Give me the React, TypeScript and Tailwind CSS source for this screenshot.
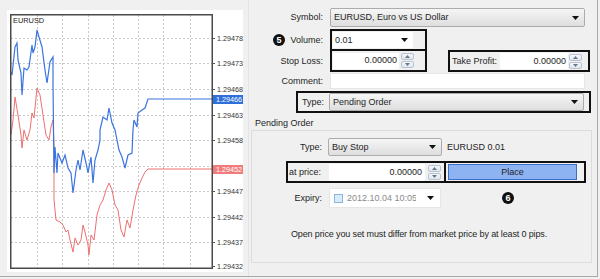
import React from "react";

const blue: [number, number][] = [
  [11, 72], [12, 75], [15, 47], [17, 43], [18, 60], [21, 73], [22, 95], [24, 68], [27, 70], [29, 67],
  [32, 45], [33, 53], [35, 47], [37, 30], [39, 37], [42, 47], [45, 70], [47, 83], [50, 62], [53, 57],
  [53, 85], [54, 173], [55, 147], [57, 173], [58, 153], [62, 163], [65, 155], [68, 168], [71, 173],
  [73, 193], [76, 170], [78, 160], [80, 170], [83, 150], [86, 163], [88, 173], [91, 157], [93, 183],
  [95, 160], [98, 150], [100, 140], [100, 130], [103, 117], [107, 120], [109, 108], [112, 123],
  [115, 130], [117, 140], [119, 150], [122, 157], [125, 168], [128, 155], [132, 153], [133, 130],
  [134, 120], [137, 127], [138, 113], [142, 110], [145, 108], [148, 99], [212, 99],
];

const red: [number, number][] = [
  [11, 135], [13, 120], [15, 97], [18, 115], [21, 135], [22, 148], [24, 130], [27, 140], [30, 130],
  [32, 113], [34, 118], [37, 88], [40, 95], [43, 115], [46, 135], [49, 140], [51, 127], [53, 120],
  [54, 145], [54, 200], [56, 220], [60, 222], [63, 225], [66, 232], [68, 230], [70, 240], [73, 252],
  [75, 238], [78, 245], [81, 240], [83, 225], [85, 232], [88, 245], [89, 255], [91, 235], [94, 240],
  [97, 215], [100, 205], [103, 200], [106, 190], [109, 183], [112, 190], [115, 205], [118, 210],
  [121, 230], [124, 237], [127, 220], [130, 228], [133, 210], [136, 195], [139, 185], [142, 178],
  [145, 172], [148, 169], [212, 169],
];

const prices: [string, number][] = [
  ["1.29478", 38], ["1.29473", 63], ["1.29468", 89], ["1.29463", 115], ["1.29458", 140],
  ["1.29447", 191], ["1.29442", 217], ["1.29437", 242], ["1.29432", 266],
];

const gridY = [38, 63, 89, 115, 140, 166, 191, 217, 242];
const gridX = [37, 62, 88, 113, 138, 163, 190];

const pts = (p: [number, number][]) => p.map(([x, y]) => `${x},${y}`).join(" ");

const Chart = () => (
  <svg width="236" height="262" viewBox="7 10 236 262" className="block">
    <rect x="7" y="10" width="236" height="262" fill="#fff" />
    {gridY.map((y) => (
      <line key={y} x1="11" y1={y + 0.5} x2="212" y2={y + 0.5} stroke="#c9c9c9" strokeDasharray="2 2" />
    ))}
    {gridX.map((x) => (
      <line key={x} x1={x + 0.5} y1="15" x2={x + 0.5} y2="268" stroke="#c9c9c9" strokeDasharray="2 2" />
    ))}
    <polyline points={pts(red)} fill="none" stroke="#ef7070" strokeWidth="1" />
    <polyline points={pts(blue)} fill="none" stroke="#3a74e0" strokeWidth="1.2" />
    <rect x="10.75" y="14.75" width="201.5" height="253.5" fill="none" stroke="#4a4a4a" strokeWidth="1.5" />
    <text x="13" y="23" fontSize="7.4" fill="#222" fontFamily="Liberation Sans, Arial, sans-serif">EURUSD</text>
    {prices.map(([t, y]) => (
      <g key={t}>
        <line x1="212" y1={y + 0.5} x2="215" y2={y + 0.5} stroke="#555" />
        <text x="217" y={y + 2.6} fontSize="7.2" fill="#333" fontFamily="Liberation Sans, Arial, sans-serif">{t}</text>
      </g>
    ))}
    <rect x="213" y="95" width="30" height="9" fill="#2f6fdc" />
    <text x="216" y="102" fontSize="7.2" fill="#fff" fontFamily="Liberation Sans, Arial, sans-serif">1.29466</text>
    <rect x="213" y="165" width="30" height="9" fill="#f07c7c" />
    <text x="216" y="172" fontSize="7.2" fill="#fff" fontFamily="Liberation Sans, Arial, sans-serif">1.29452</text>
  </svg>
);

const Arrow = () => (
  <svg width="7" height="4" viewBox="0 0 7 4" className="shrink-0">
    <path d="M0 0h7L3.5 4z" fill="#111" />
  </svg>
);

const Spinner = () => (
  <div className="flex h-[15px] w-[13px] shrink-0 flex-col gap-px">
    <div className="flex flex-1 items-center justify-center rounded-[2px] border border-[#b9c4d2] bg-gradient-to-b from-[#f4f7fb] to-[#dfe6ee]">
      <svg width="5" height="3" viewBox="0 0 5 3"><path d="M0 3h5L2.5 0z" fill="#6b7788" /></svg>
    </div>
    <div className="flex flex-1 items-center justify-center rounded-[2px] border border-[#b9c4d2] bg-gradient-to-b from-[#f4f7fb] to-[#dfe6ee]">
      <svg width="5" height="3" viewBox="0 0 5 3"><path d="M0 0h5L2.5 3z" fill="#6b7788" /></svg>
    </div>
  </div>
);

const Badge = ({ n }: { n: string }) => (
  <div className="flex h-[12px] w-[12px] shrink-0 items-center justify-center rounded-full bg-[#111] text-[9px] font-bold leading-none text-white">
    {n}
  </div>
);

const Combo = ({ w, text, white }: { w: string; text: string; white?: boolean }) => (
  <div
    className={`flex h-[18px] items-center justify-between rounded-[2px] border pl-[3px] pr-[5px] ${w} ${
      white ? "border-[#e2e2e2] bg-white" : "border-[#acacac] bg-gradient-to-b from-[#f6f6f6] to-[#dedede]"
    }`}
  >
    <span>{text}</span>
    <Arrow />
  </div>
);

export default function App() {
  return (
    <div className="h-[279px] w-[600px] overflow-hidden bg-[#f0f0f0] font-['Liberation_Sans',Arial,sans-serif] text-[9px] leading-none text-[#1e1e1e]">
      <div className="flex h-[277px] w-[598px] border-r border-b border-[#a8a8a8]">
        {/* chart side */}
        <div className="w-[248px] shrink-0 pl-[7px] pt-[10px]">
          <Chart />
        </div>

        {/* order form */}
        <div className="flex-1 border-l border-[#e4e4e4] pl-[1px]">
          {/* Symbol */}
          <div className="mt-[8px] flex h-[19px] items-center">
            <div className="w-[73px] text-right">Symbol:</div>
            <div className="ml-[7px] flex h-[19px] w-[255px] items-center justify-between rounded-[2px] border border-[#acacac] bg-gradient-to-b from-[#f6f6f6] to-[#dedede] pl-[3px] pr-[5px]">
              <span>EURUSD, Euro vs US Dollar</span>
              <Arrow />
            </div>
          </div>

          {/* Volume */}
          <div className="mt-[2px] flex h-[22px] items-center">
            <div className="flex w-[80px] items-center">
              <div className="ml-[23px]">
                <Badge n="5" />
              </div>
              <div className="flex-1 pr-[7px] text-right">Volume:</div>
            </div>
            <div className="flex h-[22px] w-[97px] items-center border-2 border-[#111] pl-[1px]">
              <div className="flex h-[16px] w-[80px] items-center justify-between bg-white pl-[2px] pr-[5px]">
                <span>0.01</span>
                <Arrow />
              </div>
            </div>
          </div>

          {/* Stop loss / Take profit */}
          <div className="flex h-[21px] items-start">
            <div className="flex h-[20px] w-[80px] items-center justify-end pr-[7px]">Stop Loss:</div>
            <div className="flex h-[21px] w-[97px] items-center gap-[2px] border-2 border-t-0 border-[#111] pl-[1px]">
              <div className="flex h-[16px] w-[66px] items-center justify-end bg-white pr-[2px]">0.00000</div>
              <Spinner />
            </div>
            <div className="-mt-[1px] ml-[21px] flex h-[22px] w-[142px] items-center border-2 border-[#111]">
              <div className="w-[50px] pl-[2px]">Take Profit:</div>
              <div className="flex h-[16px] w-[68px] items-center justify-end bg-white pr-[2px]">0.00000</div>
              <div className="ml-[1px]">
                <Spinner />
              </div>
            </div>
          </div>

          {/* Comment */}
          <div className="mt-[1px] flex h-[16px] items-center">
            <div className="w-[73px] text-right">Comment:</div>
            <div className="ml-[7px] h-[16px] w-[255px] border border-[#e6e6e6] bg-white" />
          </div>

          {/* Type */}
          <div className="ml-[46px] mt-[2px] flex h-[22px] w-[295px] items-center border-2 border-[#111]">
            <div className="w-[26px] text-right">Type:</div>
            <div className="ml-[5px]">
              <Combo w="w-[255px]" text="Pending Order" />
            </div>
          </div>

          {/* Pending order group */}
          <div className="mt-[4px] flex h-[12px] items-center pl-[5px]">Pending Order</div>
          <div className="ml-[1px] mt-[1px] w-[341px] border border-[#dcdcdc] pt-[7px] pb-[22px]">
            <div className="flex h-[18px] items-center">
              <div className="w-[70px] text-right">Type:</div>
              <div className="ml-[6px]">
                <Combo w="w-[114px]" text="Buy Stop" />
              </div>
              <div className="ml-[5px]">EURUSD 0.01</div>
            </div>

            <div className="ml-[34px] mt-[5px] flex h-[22px] w-[300px] items-center border-2 border-[#111]">
              <div className="flex h-full w-[158px] items-center border-r-2 border-[#111]">
                <div className="w-[41px] pl-[1px]">at price:</div>
                <div className="flex h-[17px] w-[96px] items-center justify-end bg-white pr-[3px]">0.00000</div>
                <div className="ml-[3px]">
                  <Spinner />
                </div>
              </div>
              <div className="ml-[2px] flex h-[16px] w-[129px] items-center justify-center border border-[#3c6fc8] bg-[#8db3f3]">
                Place
              </div>
            </div>

            <div className="mt-[5px] flex h-[20px] items-center">
              <div className="w-[70px] text-right">Expiry:</div>
              <div className="ml-[7px] flex h-[20px] w-[112px] items-center border border-[#e6e6e6] bg-white pl-[4px] pr-[6px]">
                <div className="h-[9px] w-[9px] shrink-0 border border-[#8fb6d6] bg-[#d6ecfa]" />
                <span className="ml-[4px] w-[69px] overflow-hidden whitespace-nowrap text-[#8a8a8a]">2012.10.04 10:05</span>
                <div className="ml-auto">
                  <Arrow />
                </div>
              </div>
              <div className="ml-[61px]">
                <Badge n="6" />
              </div>
            </div>

            <div className="mt-[20px] flex h-[12px] items-center pl-[39px] tracking-[-0.13px]">
              Open price you set must differ from market price by at least 0 pips.
            </div>
          </div>
        </div>
      </div>
    </div>
  );
}
